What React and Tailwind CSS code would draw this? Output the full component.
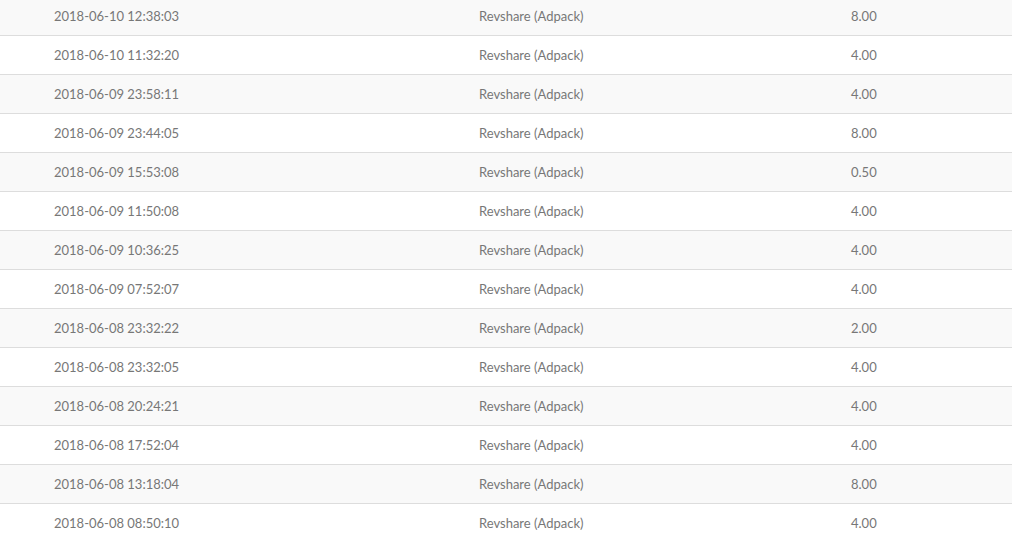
const rows = [
  ["2018-06-10 12:38:03", "8.00"],
  ["2018-06-10 11:32:20", "4.00"],
  ["2018-06-09 23:58:11", "4.00"],
  ["2018-06-09 23:44:05", "8.00"],
  ["2018-06-09 15:53:08", "0.50"],
  ["2018-06-09 11:50:08", "4.00"],
  ["2018-06-09 10:36:25", "4.00"],
  ["2018-06-09 07:52:07", "4.00"],
  ["2018-06-08 23:32:22", "2.00"],
  ["2018-06-08 23:32:05", "4.00"],
  ["2018-06-08 20:24:21", "4.00"],
  ["2018-06-08 17:52:04", "4.00"],
  ["2018-06-08 13:18:04", "8.00"],
  ["2018-06-08 08:50:10", "4.00"],
];

export default function App() {
  return (
    <div className="w-[1012px] h-[542px] overflow-hidden bg-white" style={{ fontFamily: "Lato, 'Open Sans', sans-serif" }}>
      <div className="-mt-[3px]">
        {rows.map(([d, a], i) => (
          <div
            key={i}
            className={`flex items-center h-[39px] pt-[2px] border-b border-[#dddddd] text-[13px] text-[#777777] ${i % 2 === 0 ? "bg-[#f9f9f9]" : "bg-white"}`}
          >
            <div className="w-[479px] pl-[54px]">{d}</div>
            <div className="w-[372px]">Revshare (Adpack)</div>
            <div className="flex-1">{a}</div>
          </div>
        ))}
      </div>
    </div>
  );
}
